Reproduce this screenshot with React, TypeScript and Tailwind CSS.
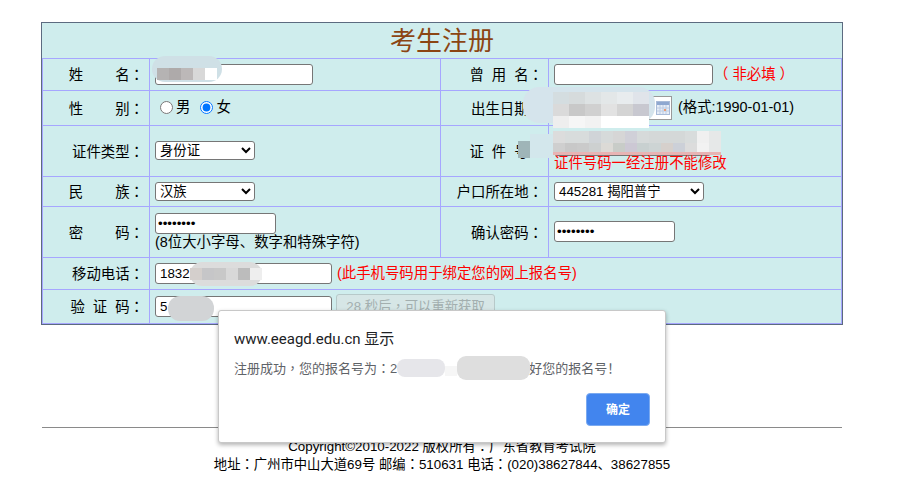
import React from 'react';

const inputCls = "h-[21px] rounded-[3px] border border-[#767676] bg-white px-[2px] text-[13.33px] text-black outline-none align-middle";
const selectCls = "h-[19px] rounded-[3px] border border-[#767676] bg-white text-[13.33px] text-black outline-none align-middle";
const labelCls = "border border-[#a6a6ff] pr-[5px] pt-[2px] text-right text-[14.4px] text-black";
const fieldCls = "border border-[#a6a6ff] px-[5px] text-[14.4px] text-black";

// the reference font centres its full-width punctuation, the TC cut of Noto does too
function P({ c = "：" }: { c?: string }) {
    return <span className="font-['Noto_Sans_CJK_TC']">{c}</span>;
}

// pixelated redaction blocks laid over the personal data
function Mosaic({ className, cols, cells }: { className: string; cols: string; cells: string[] }) {
    return (
        <div className={`absolute grid ${cols} ${className}`}>
            {cells.map((c, i) => (
                <div key={i} className="h-[12px]" style={{ background: c }} />
            ))}
        </div>
    );
}

export default function App() {
    return (
        <div
            className="relative h-[499px] w-[922px] overflow-hidden bg-white"
            style={{ fontFamily: '"Liberation Sans", "Noto Sans CJK SC", sans-serif' }}
        >
            <div className="ml-[41px] w-[802px] pt-[22px]">
                <div className="border border-[#5c6b80] bg-[#cfeded]">
                    <table className="w-full table-fixed border-collapse">
                        <colgroup>
                            <col className="w-[107px]" />
                            <col className="w-[291px]" />
                            <col className="w-[108px]" />
                            <col />
                        </colgroup>
                        <tbody>
                            <tr className="h-[35px]">
                                <td colSpan={4} className="border-b border-[#a6a6ff] pt-[1px] text-center text-[26px] leading-none text-[#8b4513]">
                                    考生注册
                                </td>
                            </tr>
                            <tr className="h-[32px]">
                                <td className={labelCls}>姓&nbsp;&nbsp;&nbsp;&nbsp;&nbsp;&nbsp;&nbsp;&nbsp;名<P /></td>
                                <td className={fieldCls}>
                                    <input className={`${inputCls} w-[158px]`} defaultValue="" />
                                </td>
                                <td className={labelCls}>曾&nbsp;&nbsp;用&nbsp;&nbsp;名<P /></td>
                                <td className={fieldCls}>
                                    <input className={`${inputCls} w-[159px]`} />
                                    <span className="relative top-[1px] ml-[1px] text-[#ff0000]">（ 非必填 ）</span>
                                </td>
                            </tr>
                            <tr className="h-[35px]">
                                <td className={labelCls}>性&nbsp;&nbsp;&nbsp;&nbsp;&nbsp;&nbsp;&nbsp;&nbsp;别<P /></td>
                                <td className={`${fieldCls} pt-[3px]`}>
                                    <label className="inline-flex items-center">
                                        <input type="radio" name="sex" className="ml-[5px] mr-[3px] h-[13px] w-[13px]" />男
                                    </label>
                                    <label className="ml-[10px] inline-flex items-center">
                                        <input type="radio" name="sex" defaultChecked className="mr-[3px] h-[13px] w-[13px]" />女
                                    </label>
                                </td>
                                <td className={labelCls}>出生日期<P /></td>
                                <td className={fieldCls}>
                                    <div className="flex items-center">
                                        <div className="flex h-[24px] w-[118px] items-center justify-end border border-[#999] bg-white pr-[1px]">
                                            <svg width="14" height="14" viewBox="0 0 14 14">
                                                <rect x="0.5" y="0.5" width="13" height="13" fill="#e6edf7" stroke="#a9bbd8" />
                                                <rect x="1" y="1" width="12" height="3" fill="#8fa8d0" />
                                                <path d="M1 7h12M1 10h12M4 4v9M7 4v9M10 4v9" stroke="#bccbe2" strokeWidth="1" />
                                                <rect x="8" y="8" width="2" height="2" fill="#e89a70" />
                                            </svg>
                                        </div>
                                        <span className="ml-[6px]">(格式:1990-01-01)</span>
                                    </div>
                                </td>
                            </tr>
                            <tr className="h-[51px]">
                                <td className={labelCls}>证件类型<P /></td>
                                <td className={fieldCls}>
                                    <select className={`${selectCls} w-[100px]`} defaultValue="身份证">
                                        <option>身份证</option>
                                    </select>
                                </td>
                                <td className={labelCls}>证&nbsp;&nbsp;件&nbsp;&nbsp;号<P /></td>
                                <td className={`${fieldCls} leading-[14px]`}>
                                    <input className={`${inputCls} block h-[24px] w-[157px]`} />
                                    <span className="text-[#ff0000]">证件号码一经注册不能修改</span>
                                </td>
                            </tr>
                            <tr className="h-[30px]">
                                <td className={labelCls}>民&nbsp;&nbsp;&nbsp;&nbsp;&nbsp;&nbsp;&nbsp;&nbsp;族<P /></td>
                                <td className={fieldCls}>
                                    <select className={`${selectCls} w-[100px]`} defaultValue="汉族">
                                        <option>汉族</option>
                                    </select>
                                </td>
                                <td className={labelCls}>户口所在地<P /></td>
                                <td className={fieldCls}>
                                    <select className={`${selectCls} w-[150px]`} defaultValue="445281 揭阳普宁">
                                        <option>445281 揭阳普宁</option>
                                    </select>
                                </td>
                            </tr>
                            <tr className="h-[51px]">
                                <td className={labelCls}>密&nbsp;&nbsp;&nbsp;&nbsp;&nbsp;&nbsp;&nbsp;&nbsp;码<P /></td>
                                <td className={`${fieldCls} leading-[16px]`}>
                                    <input type="password" className={`${inputCls} block w-[121px]`} defaultValue="12345678" />
                                    <span>(8位大小字母、数字和特殊字符)</span>
                                </td>
                                <td className={labelCls}>确认密码<P /></td>
                                <td className={fieldCls}>
                                    <input type="password" className={`${inputCls} w-[121px]`} defaultValue="12345678" />
                                </td>
                            </tr>
                            <tr className="h-[32px]">
                                <td className={labelCls}>移动电话<P /></td>
                                <td colSpan={3} className={fieldCls}>
                                    <input className={`${inputCls} w-[177px] pl-[4px]`} defaultValue="1832" />
                                    <span className="relative top-[1px] ml-[5px] text-[#ff0000]">(此手机号码用于绑定您的网上报名号)</span>
                                </td>
                            </tr>
                            <tr className="h-[34px]">
                                <td className={labelCls}>验&nbsp;&nbsp;证&nbsp;&nbsp;码<P /></td>
                                <td colSpan={3} className={fieldCls}>
                                    <input className={`${inputCls} w-[177px] pl-[4px]`} defaultValue="5" />
                                    <button
                                        disabled
                                        className="ml-[4px] h-[25px] w-[159px] rounded-[3px] border border-[#b7c9c9] bg-[#d6e6e6] align-middle text-[13.33px] text-[#a3afaf]"
                                    >
                                        28 秒后<P c="，" />可以重新获取
                                    </button>
                                </td>
                            </tr>
                        </tbody>
                    </table>
                </div>

                <div className="mx-[1px] mt-[102px] border-t border-[#8a8a8a] pt-[9px] text-center text-[13.33px] leading-[17px] text-black">
                    <p>Copyright©2010-2022 版权所有<P />广东省教育考试院</p>
                    <p>地址<P />广州市中山大道69号 邮编<P />510631 电话<P />(020)38627844、38627855</p>
                </div>
            </div>

            {/* redactions */}
            <div className="absolute left-[152px] top-[56px] h-[26px] w-[70px] rounded-[14px] bg-[#cfe0e6]" />
            <Mosaic
                className="left-[157px] top-[68px] w-[60px]"
                cols="grid-cols-5"
                cells={["#b5b3b3", "#aeaaaa", "#bcb8b8", "#d8d8d8", "#ffffff"]}
            />
            <div className="absolute left-[523px] top-[87px] h-[36px] w-[132px] rounded-[16px] bg-[#d5e4ec]" />
            <Mosaic
                className="left-[553px] top-[92px] w-[96px]"
                cols="grid-cols-6"
                cells={["#d4dde0", "#d6dbdc", "#dde2e3", "#e3e7e8", "#e8ecee", "#e0e4ea", "#dadada", "#c8c8c8", "#d0d0d0", "#e2e2e2", "#d4d4d4", "#c8c8d0", "#eeeeee", "#f6f6f6", "#f2f2f2", "#ffffff", "#ffffff", "#ffffff"]}
            />
            <div className="absolute left-[518px] top-[141px] h-[17px] w-[12px] bg-[#9fb5b8]" />
            <div className="absolute left-[530px] top-[134px] h-[24px] w-[24px] bg-[#d3e7ec]" />
            <Mosaic
                className="left-[553px] top-[131px] w-[168px]"
                cols="grid-cols-[repeat(14,minmax(0,1fr))]"
                cells={["#dcdcdc", "#d8dcdc", "#d8dcdc", "#d0d4d8", "#d6dada", "#d6d6d6", "#d0d0d8", "#d6dada", "#d4d8d8", "#d4d8d8", "#d4d8d8", "#d8dcdc", "#f0f0f0", "#e6e8e8", "#cfcfcf", "#c8c8c8", "#cacaca", "#cdd0d0", "#dcdad6", "#c8ccc8", "#ccc8d4", "#c8d0d0", "#cdd4d4", "#d6d0cc", "#ccd0d8", "#dcdcdc", "#f2f2f2", "#e6e8e8"]}
            />
            <div className="absolute left-[553px] top-[152px] h-[3px] w-[168px] bg-[#e8b4b4]" />
            <div className="absolute left-[190px] top-[262px] h-[24px] w-[72px] rounded-[12px] bg-[#dcdcdc]" />
            <Mosaic
                className="left-[190px] top-[268px] w-[72px]"
                cols="grid-cols-6"
                cells={["#d4cfcc", "#c6c6c8", "#c8c8c8", "#d8d8d8", "#bcbcbc", "#eeeeee"]}
            />
            <div className="absolute left-[168px] top-[296px] h-[25px] w-[46px] rounded-[12px] bg-[#d2d4d6]" />

            {/* alert dialog */}
            <div className="absolute left-[218px] top-[310px] flex h-[133px] w-[448px] flex-col rounded-[3px] border border-[#c8c8c8] bg-white px-[15px] pt-[19px] shadow-[0_2px_4px_rgba(0,0,0,0.3)]">
                <div className="text-[15px] leading-[18px] text-[#202124]" style={{ fontFamily: 'Roboto, "Noto Sans CJK SC", sans-serif' }}>
                    www.eeagd.edu.cn 显示
                </div>
                <div className="relative mt-[10px] text-[13px] leading-[20px] text-[#5f6368]">
                    注册成功<P c="，" />您的报名号为<P />2
                    <span className="ml-[132px]">好您的报名号！</span>
                    <div className="absolute left-[163px] top-[1px] h-[18px] w-[48px] rounded-[8px] bg-[#e6e6ea]" />
                    <div className="absolute left-[223px] top-[-2px] h-[24px] w-[73px] rounded-[9px] bg-[#dedede]" />
                    <div className="absolute left-[211px] top-[8px] h-[10px] w-[12px] bg-[#f6f6f6]" />
                </div>
                <div className="mt-auto flex justify-end pb-[16px]">
                    <button className="h-[33px] w-[64px] rounded-[4px] border border-[#7baaf0] bg-[#4285ee] text-[12px] font-bold text-white">
                        确定
                    </button>
                </div>
            </div>
        </div>
    );
}
